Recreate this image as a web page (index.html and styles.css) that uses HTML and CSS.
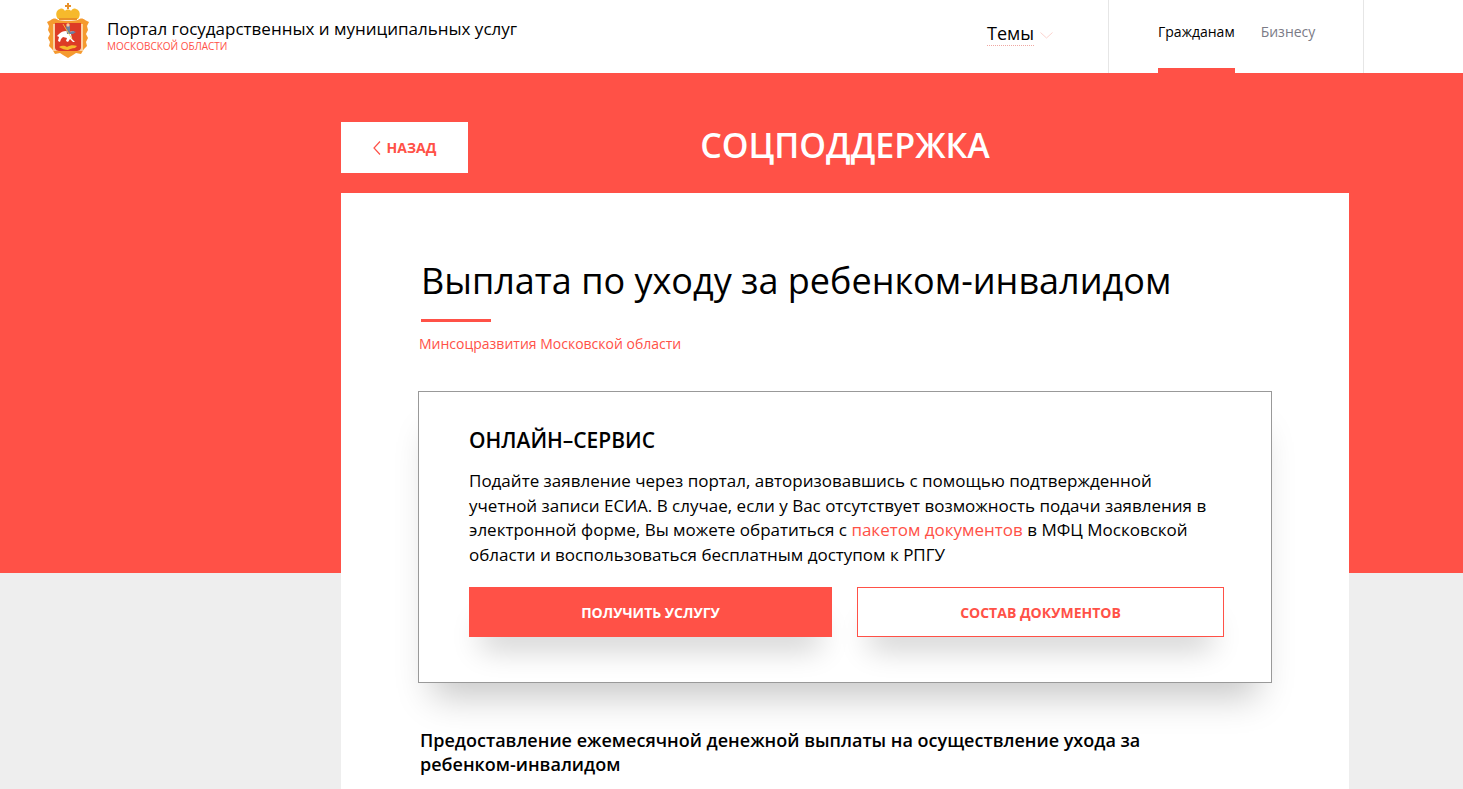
FILE: index.html
```html
<!DOCTYPE html>
<html lang="ru">
<head>
  <meta charset="UTF-8" />
  <meta name="viewport" content="width=device-width, initial-scale=1.0" />
  <title>Выплата по уходу за ребенком-инвалидом</title>
  <link rel="stylesheet" href="styles.css">
</head>

<body>
  <header class="top">
    <a class="brand" href="#">
      <svg class="brand-logo" viewBox="0 0 44 60" width="44" height="60" aria-hidden="true">
        <!-- Корона -->
        <path d="M21 2h2v2h2v2h-2v2h-2V6h-2V4h2z" fill="#e8912a"/>
        <path d="M14 8c2-1 4 0 5 2 1-2 5-2 6 0 1-2 3-3 5-2 4 1 5 6 2 10H12C9 14 10 9 14 8z" fill="#f6b92c"/>
        <rect x="13" y="17" width="18" height="2" fill="#e8912a"/>
        <!-- Рамка -->
        <path d="M5 19c2-2 5-2 7 0 3 1 17 1 20 0 2-2 5-2 7 0l4 2-2 4 1 4-2 4 2 4-2 4 1 4-3 3-3 5-5-1-3 2-5 3-5-3-3-2-5 1-3-5-3-3 1-4-2-4 2-4-2-4 1-4-2-4z" fill="#f59a2f"/>
        <path d="M7 23h30v27H7z" fill="#fff" opacity=".55"/>
        <!-- Щит -->
        <path d="M9 22h26v24c0 3-2 4-5 4H14c-3 0-5-1-5-4z" fill="#dd3b26"/>
        <!-- Всадник -->
        <path d="M13 33c2-2 4-3 7-3l3 1 5-1-1 2-2 1 1 5 3 3-2 0-3-3-2 3-2-1 1-3-4-1-2 2-1 3-2-1 1-4-2-1z" fill="#fff"/>
        <path d="M20 25h4v6l3-1 3 1-3 2h-6z" fill="#6f7f9e"/>
        <circle cx="22" cy="24" r="1.7" fill="#f6c9a0"/>
        <path d="M17 23l9 15" stroke="#f6d34a" stroke-width=".8"/>
        <!-- Змей -->
        <path d="M13 46c3-2 6-1 8 0 3-2 7-2 10-1l-2 2c-3 0-5 1-7 2-3 0-6-1-9-3z" fill="#f6b92c"/>
      </svg>
      <span class="brand-text">
        <span class="brand-name">Портал государственных и муниципальных услуг</span>
        <span class="brand-region">МОСКОВСКОЙ ОБЛАСТИ</span>
      </span>
    </a>

    <a class="themes" href="#">
      <span class="themes-label">Темы</span>
      <svg class="themes-arrow" viewBox="0 0 13 7" width="13" height="7" aria-hidden="true">
        <path d="M.5.5l6 5.500 6-5.500" fill="none" stroke="#fbd3ce" stroke-width="1"/>
      </svg>
    </a>

    <nav class="audience">
      <a class="audience-link active" href="#">Гражданам</a>
      <a class="audience-link" href="#">Бизнесу</a>
    </nav>
  </header>

  <main class="page">
    <div class="page-head">
      <a class="back" href="#">
        <svg viewBox="0 0 8 14" width="8" height="14" aria-hidden="true">
          <path d="M7 .5L1 7l6 6.500" fill="none" stroke="#ff5147" stroke-width="1.200"/>
        </svg>
        НАЗАД
      </a>
      <h2 class="page-title">СОЦПОДДЕРЖКА</h2>
    </div>

    <article class="card">
      <h1 class="card-title">Выплата по уходу за ребенком-инвалидом</h1>
      <div class="card-rule"></div>
      <a class="card-org" href="#">Минсоцразвития Московской области</a>

      <section class="online">
        <h3>ОНЛАЙН–СЕРВИС</h3>
        <p>Подайте заявление через портал, авторизовавшись с помощью подтвержденной учетной записи ЕСИА. В случае, если у Вас отсутствует возможность подачи заявления в электронной форме, Вы можете обратиться с <a href="#">пакетом документов</a> в МФЦ Московской области и воспользоваться бесплатным доступом к РПГУ</p>
        <div class="online-actions">
          <a class="btn btn-fill" href="#">ПОЛУЧИТЬ УСЛУГУ</a>
          <a class="btn btn-line" href="#">СОСТАВ ДОКУМЕНТОВ</a>
        </div>
      </section>

      <h4 class="card-sub">Предоставление ежемесячной денежной выплаты на осуществление ухода за ребенком-инвалидом</h4>
    </article>
  </main>
</body>
</html>
```

FILE: styles.css
```css
html {
  overflow: hidden;
}

body {
  background: #eee;
  color: #000;
  font-family: "Open Sans", sans-serif;
  margin: 0;
  padding: 0;
}

a {
  text-decoration: none;
}

/* Шапка */
.top {
  display: flex;
  align-items: stretch;
  height: 73px;
  background: #fff;
}

.brand {
  display: flex;
  align-items: flex-start;
  gap: 17px;
  padding: 1px 0 0 46px;
  color: #000;
  width: 987px;
  box-sizing: border-box;
}

.brand-text {
  display: flex;
  flex-direction: column;
  padding-top: 16px;
}

.brand-name {
  font-size: 17px;
  line-height: 23px;
}

.brand-region {
  font-size: 10px;
  line-height: 13px;
  color: #ff5147;
}

.themes {
  display: flex;
  align-items: flex-start;
  gap: 6px;
  width: 121px;
  padding-top: 21px;
  color: #000;
  font-size: 18px;
  line-height: 24px;
}

.themes-label {
  border-bottom: 1px dotted #f0a8a2;
  height: 24px;
}

.themes-arrow {
  margin-top: 11px;
}

.audience {
  display: flex;
  gap: 26px;
  width: 256px;
  padding-left: 49px;
  box-sizing: border-box;
  border-left: 1px solid #e6e6e6;
  border-right: 1px solid #e6e6e6;
}

.audience-link {
  color: #7b7b86;
  font-size: 14px;
  line-height: 20px;
  padding-top: 22px;
  height: 73px;
  box-sizing: border-box;
}

.audience-link.active {
  color: #000;
  font-weight: 400;
  border-bottom: 5px solid #ff5147;
}

/* Основная часть */
.page {
  background: linear-gradient(#ff5147 500px, #eee 500px);
  padding-left: 341px;
  height: 716px;
}

.page-head {
  display: grid;
  grid-template-columns: 127px 1fr 127px;
  width: 1008px;
  height: 120px;
  padding-top: 0;
  box-sizing: border-box;
}

.back {
  display: flex;
  align-items: center;
  justify-content: center;
  gap: 6px;
  height: 51px;
  margin-top: 49px;
  background: #fff;
  color: #ff5147;
  font-size: 14px;
  font-weight: 700;
}

.page-title {
  margin: 49px 0 0;
  color: #fff;
  font-size: 34px;
  line-height: 46px;
  font-weight: 600;
  text-align: center;
}

.card {
  width: 1008px;
  height: 596px;
  box-sizing: border-box;
  background: #fff;
  padding: 63px 0 0 77px;
}

.card-title {
  margin: 0 0 0 3px;
  font-size: 36px;
  line-height: 50px;
  font-weight: 500;
}

.card-rule {
  width: 70px;
  height: 3px;
  margin: 13px 0 0 3px;
  background: #ff5147;
}

.card-org {
  display: block;
  margin-top: 12px;
  margin-left: 1px;
  color: #ff5147;
  font-size: 14px;
  line-height: 20px;
}

/* Блок онлайн-сервиса */
.online {
  width: 854px;
  height: 292px;
  box-sizing: border-box;
  margin-top: 37px;
  padding: 33px 47px 0 50px;
  border: 1px solid #999;
  background: #fff;
  box-shadow: 0 28px 34px -14px rgba(0, 0, 0, 0.22);
}

.online h3 {
  margin: 0;
  font-size: 21px;
  line-height: 30px;
  font-weight: 600;
}

.online p {
  margin: 14px 0 0;
  font-size: 17px;
  line-height: 24.500px;
}

.online p a {
  color: #ff5147;
}

.online-actions {
  display: flex;
  gap: 25px;
  margin-top: 20px;
}

.btn {
  display: flex;
  align-items: center;
  justify-content: center;
  height: 50px;
  box-sizing: border-box;
  font-size: 14px;
  font-weight: 700;
  box-shadow: 0 24px 30px -12px rgba(0, 0, 0, 0.2);
}

.btn-fill {
  width: 363px;
  background: #ff5147;
  color: #fff;
}

.btn-line {
  width: 367px;
  background: #fff;
  color: #ff5147;
  border: 1px solid #ff5147;
}

.card-sub {
  width: 760px;
  margin: 45px 0 0 2px;
  font-size: 18px;
  line-height: 24px;
  font-weight: 600;
}
```
